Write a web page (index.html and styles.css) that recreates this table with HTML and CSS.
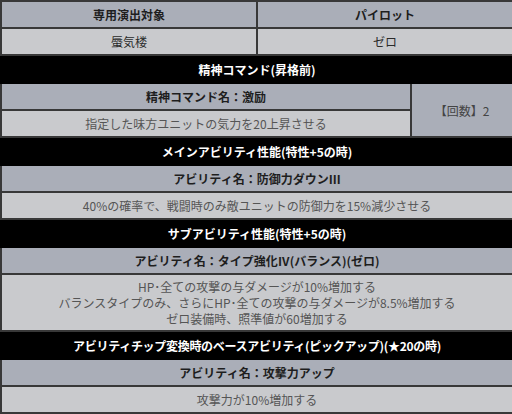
FILE: index.html
```html
<!DOCTYPE html>
<html lang="ja">
<head>
<meta charset="utf-8">
<link rel="stylesheet" href="styles.css">
</head>
<body>
<table class="info">
  <colgroup>
    <col class="c1">
    <col class="c2">
    <col class="c3">
  </colgroup>
  <tr class="row">
    <td class="hd">専用演出対象</td>
    <td class="hd" colspan="2">パイロット</td>
  </tr>
  <tr class="row">
    <td class="lt val">蜃気楼</td>
    <td class="lt val" colspan="2">ゼロ</td>
  </tr>
  <tr class="bar">
    <td class="bk" colspan="3">精神コマンド(昇格前)</td>
  </tr>
  <tr class="row">
    <td class="hd" colspan="2">精神コマンド名：激励</td>
    <td class="hd count" rowspan="2">【回数】2</td>
  </tr>
  <tr class="row">
    <td class="lt" colspan="2">指定した味方ユニットの気力を20上昇させる</td>
  </tr>
  <tr class="bar">
    <td class="bk" colspan="3">メインアビリティ性能(特性+5の時)</td>
  </tr>
  <tr class="row">
    <td class="hd" colspan="3">アビリティ名：防御力ダウンⅢ</td>
  </tr>
  <tr class="row">
    <td class="lt" colspan="3">40%の確率で、戦闘時のみ敵ユニットの防御力を15%減少させる</td>
  </tr>
  <tr class="bar">
    <td class="bk" colspan="3">サブアビリティ性能(特性+5の時)</td>
  </tr>
  <tr class="row">
    <td class="hd" colspan="3">アビリティ名：タイプ強化Ⅳ(バランス)(ゼロ)</td>
  </tr>
  <tr class="multi">
    <td class="lt" colspan="3"><span class="ln">HP･全ての攻撃の与ダメージが10%増加する</span><span class="ln">バランスタイプのみ、さらにHP･全ての攻撃の与ダメージが8.5%増加する</span><span class="ln">ゼロ装備時、照準値が60増加する</span></td>
  </tr>
  <tr class="bar">
    <td class="bk long" colspan="3">アビリティチップ変換時のベースアビリティ(ピックアップ)(★20の時)</td>
  </tr>
  <tr class="row">
    <td class="hd" colspan="3">アビリティ名：攻撃力アップ</td>
  </tr>
  <tr class="row">
    <td class="lt" colspan="3">攻撃力が10%増加する</td>
  </tr>
</table>
</body>
</html>
```
FILE: styles.css
```css
html, body {
  margin: 0;
  padding: 0;
  background: #ffffff;
}
body {
  font-family: "Noto Sans CJK JP", "Noto Sans", sans-serif;
  font-size: 12px;
}
.info {
  width: 512px;
  border-collapse: collapse;
  table-layout: fixed;
}
.c1 { width: 256px; }
.c2 { width: 154px; }
.c3 { width: 102px; }
.info td {
  border: 2px solid #383838;
  padding: 0;
  text-align: center;
  vertical-align: middle;
  line-height: 15px;
}
.row td { height: 25px; }
.bar td { height: 26px; }
.multi td { height: 55px; }
.ln {
  display: block;
  line-height: 16px;
}
.hd {
  background: #aaaeb8;
  color: #1e1e1e;
  font-weight: bold;
}
.lt {
  background: #c9cacd;
  color: #555555;
}
.lt.val {
  color: #2a2a2a;
}
.bk {
  background: #000000;
  color: #ffffff;
  font-weight: bold;
  border-color: #000000 !important;
}
.bk.long {
  letter-spacing: -0.3px;
}
.count {
  font-weight: normal;
  color: #444444;
}
```
